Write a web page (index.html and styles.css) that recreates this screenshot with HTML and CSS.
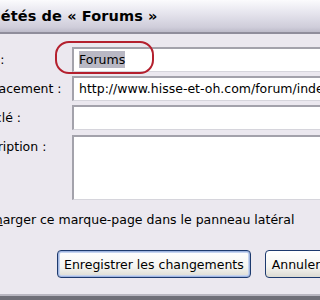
FILE: index.html
```html
<!DOCTYPE html>
<html lang="fr">
<head>
    <meta charset="UTF-8">
    <title>Propriétés de « Forums »</title>
<link rel="stylesheet" href="styles.css">
</head>
<body>
    <div class="dialog">
        <div class="titlebar"><span class="title">Propriétés de « Forums »</span></div>
        <div class="content">
            <div class="fields">
                <label class="lbl">Nom :</label>
                <div class="cell">
                    <div class="input"><span class="sel">Forums</span></div>
                    <span class="circle"></span>
                </div>

                <label class="lbl">Emplacement :</label>
                <div class="cell">
                    <div class="input">http://www.hisse-et-oh.com/forum/index.php</div>
                </div>

                <label class="lbl">Mot-clé :</label>
                <div class="cell">
                    <div class="input"></div>
                </div>

                <label class="lbl lbl-top">Description :</label>
                <div class="cell">
                    <div class="input area"></div>
                </div>
            </div>

            <div class="check">
                <span class="box"></span>
                <span>C<u>h</u>arger ce marque-page dans le panneau latéral</span>
            </div>

            <div class="actions">
                <button class="btn btn-default">Enregistrer les changements</button>
                <button class="btn">Annuler</button>
            </div>
        </div>
    </div>
</body>
</html>
```

FILE: styles.css
```css
body {
  margin: 0;
  width: 320px;
  height: 300px;
  overflow: hidden;
  background: #ebe8ef;
  font-family: "DejaVu Sans", "Verdana", sans-serif;
  font-size: 12.5px;
  color: #000;
}

.dialog {
  margin-left: -48px;
  width: 460px;
  height: 300px;
  display: flex;
  flex-direction: column;
}

.titlebar {
  height: 32px;
  line-height: 32px;
  font-weight: bold;
  font-size: 14.5px;
  background: linear-gradient(#fbfbfd 0%, #e6e5ee 40%, #cfcdda 85%, #bdbbc9 100%);
  border-bottom: 2px solid #8f8d9b;
}

.title {
  margin-left: -2px;
  letter-spacing: 0.1px;
}

.content {
  flex: 1;
  padding: 13px 0 0 15px;
  border-bottom: 4px solid #6f6f78;
  box-shadow: inset 0 -2px 0 #b8b6c0;
}

/* label column + fields */
.fields {
  display: grid;
  grid-template-columns: 105px 1fr;
  row-gap: 4px;
  align-items: center;
}

.lbl {
  white-space: nowrap;
}

.lbl-top {
  align-self: start;
  padding-top: 5px;
}

.cell {
  position: relative;
}

.input {
  height: 22px;
  line-height: 22px;
  padding: 0 5px;
  background: #fff;
  border-top: 2px solid #a3a2ab;
  border-left: 2px solid #a3a2ab;
  border-right: 1px solid #d6d5dc;
  border-bottom: 1px solid #d6d5dc;
  white-space: nowrap;
  overflow: hidden;
}

.input.area {
  height: 62px;
  margin-top: 1px;
}

.sel {
  background: #b9b8c4;
  padding: 1px 0;
}

/* red marker drawn over the first field */
.circle {
  position: absolute;
  left: -17px;
  top: -6px;
  width: 95px;
  height: 29px;
  border: 2px solid #b4202e;
  border-radius: 14px;
}

.check {
  display: flex;
  align-items: center;
  gap: 6px;
  margin-top: 11px;
  height: 16px;
}

.box {
  width: 11px;
  height: 11px;
  border: 1px solid #1c5180;
  background: #f4f4f2;
}

.actions {
  display: flex;
  gap: 14px;
  margin-top: 23px;
  padding-left: 90px;
}

.btn {
  font-family: inherit;
  font-size: 12.5px;
  height: 28px;
  padding: 0 6px;
  border: 1px solid #1d3a6e;
  border-radius: 4px;
  background: linear-gradient(#ffffff 0%, #f5f5f1 60%, #dcdbd3 100%);
  color: #000;
}

.btn-default {
  box-shadow: inset 0 0 0 1px #9fb5e0, inset 0 0 0 2px #c6d4ef;
}
```
